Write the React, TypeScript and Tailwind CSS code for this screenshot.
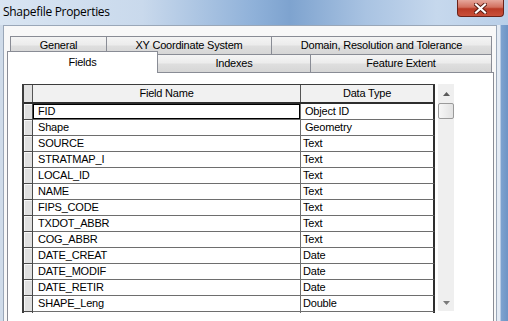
const fields: [string, string][] = [
  ['FID', 'Object ID'],
  ['Shape', 'Geometry'],
  ['SOURCE', 'Text'],
  ['STRATMAP_I', 'Text'],
  ['LOCAL_ID', 'Text'],
  ['NAME', 'Text'],
  ['FIPS_CODE', 'Text'],
  ['TXDOT_ABBR', 'Text'],
  ['COG_ABBR', 'Text'],
  ['DATE_CREAT', 'Date'],
  ['DATE_MODIF', 'Date'],
  ['DATE_RETIR', 'Date'],
  ['SHAPE_Leng', 'Double'],
  ['', ''],
]

const tabBg =
  'bg-[linear-gradient(to_bottom,#f4f4f4_0%,#ececec_45%,#dedede_55%,#d6d6d6_100%)]'

function TabLabel({ text }: { text: string }) {
  return <span className="text-[11px] tracking-[-0.2px] text-black leading-none">{text}</span>
}

function CloseButton() {
  return (
    <div className="mr-[4px] w-[47px] h-[17px] rounded-b-[4px] border border-t-0 border-[#6a2219] bg-[linear-gradient(to_bottom,#e6a79c_0%,#d2705f_45%,#b93a26_55%,#c9503a_100%)] flex items-center justify-center">
      <svg width="13" height="11" viewBox="0 0 13 11">
        <path d="M2 1.5 L11 9.5 M11 1.5 L2 9.5" stroke="#5a1b12" strokeWidth="4" strokeLinecap="square" />
        <path d="M2 1.5 L11 9.5 M11 1.5 L2 9.5" stroke="#ffffff" strokeWidth="2.2" strokeLinecap="square" />
      </svg>
    </div>
  )
}

function Scrollbar() {
  return (
    <div className="ml-[3px] w-[16px] h-[227px] bg-[#efefef] flex flex-col">
      <div className="h-[19px] flex items-center justify-center">
        <svg width="7" height="4" viewBox="0 0 7 4">
          <path d="M0 4 L3.5 0 L7 4 Z" fill="#5a5a5a" />
        </svg>
      </div>
      <div className="h-[16px] rounded-[2px] border border-[#9a9a9a] bg-[linear-gradient(to_right,#f6f6f6,#e2e2e2)]" />
      <div className="flex-1" />
      <div className="h-[17px] flex items-center justify-center">
        <svg width="7" height="4" viewBox="0 0 7 4">
          <path d="M0 0 L3.5 4 L7 0 Z" fill="#7a7a7a" />
        </svg>
      </div>
    </div>
  )
}

function FieldGrid() {
  return (
    <div className="w-[413px] h-[229px] overflow-hidden border-l-2 border-t border-[#3c3c3c] flex flex-col">
      <div className="h-[19px] shrink-0 flex border-b-2 border-[#2e2e2e]">
        <div className="w-[9px] bg-[#e2e2e2] border-r border-[#555]" />
        <div className="w-[268px] bg-[#f1f1f1] border-r border-[#555] flex items-center justify-center">
          <span className="text-[11px] tracking-[-0.2px]">Field Name</span>
        </div>
        <div className="w-[134px] bg-[#f1f1f1] border-r-2 border-[#2e2e2e] flex items-center justify-center">
          <span className="text-[11px] tracking-[-0.2px]">Data Type</span>
        </div>
      </div>
      {fields.map(([name, type], i) => (
        <div key={i} className="h-[16px] shrink-0 flex">
          <div className="w-[9px] bg-[#e0e0e0] border-r border-b border-[#4a4a4a] shadow-[inset_1px_1px_0_#f8f8f8]" />
          <div
            className={
              'w-[268px] border-r border-b border-[#6e6e6e] flex items-center pl-[5px] bg-white ' +
              (i === 0 ? 'shadow-[inset_0_0_0_1px_#000]' : '')
            }
          >
            <span className="text-[11px] tracking-[-0.2px] leading-none">{name}</span>
          </div>
          <div
            className={
              'w-[134px] border-r-2 border-r-[#2e2e2e] border-b border-b-[#6e6e6e] flex items-center bg-white ' +
              (i < 2 ? 'pl-[4px]' : 'pl-[2px]')
            }
          >
            <span className="text-[11px] tracking-[-0.2px] leading-none">{type}</span>
          </div>
        </div>
      ))}
    </div>
  )
}

export default function App() {
  return (
    <div className="w-[508px] h-[321px] overflow-hidden flex flex-col font-['Liberation_Sans',Arial,sans-serif] text-black">
      <div className="h-[25px] shrink-0 flex items-start justify-between bg-[linear-gradient(to_right,#d9e5f2_0%,#c9d9ec_28%,#8fb1d9_50%,#7ea3cf_57%,#a9c3e2_72%,#c6d8ed_86%,#b9cfe8_100%)]">
        <span className="mt-[4px] ml-[3px] text-[12px] leading-[16px] font-['Open_Sans',sans-serif] tracking-[-0.3px]">
          Shapefile Properties
        </span>
        <CloseButton />
      </div>
      <div className="flex-1 flex min-h-0">
        <div className="w-[3px] bg-[#cfdbe9]" />
        <div className="w-[494px] bg-[#f8f8f8] border-l border-t border-r border-[#9aa7b8] pt-[10px] pl-[3px]">
          <div className="w-[487px] flex flex-col">
            <div className="ml-[3px] w-[482px] h-[18px] flex">
              <div className={`w-[96px] border-l border-t border-[#898c95] ${tabBg} flex items-center justify-center`}>
                <TabLabel text="General" />
              </div>
              <div className={`w-[165px] border-l border-t border-[#898c95] ${tabBg} flex items-center justify-center`}>
                <TabLabel text="XY Coordinate System" />
              </div>
              <div className={`w-[221px] border-l border-t border-r border-[#898c95] ${tabBg} flex items-center justify-center`}>
                <TabLabel text="Domain, Resolution and Tolerance" />
              </div>
            </div>
            <div className="w-[485px] h-[18px] flex items-end">
              <div className="relative z-10 -mb-px w-[151px] h-[22px] bg-white border-l border-t border-r border-[#898c95] flex items-center justify-center pb-[1px]">
                <TabLabel text="Fields" />
              </div>
              <div className={`w-[152px] h-[18px] border-t border-[#898c95] ${tabBg} flex items-center justify-center`}>
                <TabLabel text="Indexes" />
              </div>
              <div className={`w-[182px] h-[18px] border-l border-t border-r border-[#898c95] ${tabBg} flex items-center justify-center`}>
                <TabLabel text="Feature Extent" />
              </div>
            </div>
            <div className="w-[487px] h-[260px] bg-white border border-[#898c95] pt-[11px] pl-[14px] flex items-start">
              <FieldGrid />
              <Scrollbar />
            </div>
          </div>
        </div>
        <div className="flex-1 bg-[linear-gradient(to_right,#e4ebf4_0%,#e4ebf4_25%,#7da2cf_40%,#6e94c5_100%)]" />
      </div>
    </div>
  )
}
